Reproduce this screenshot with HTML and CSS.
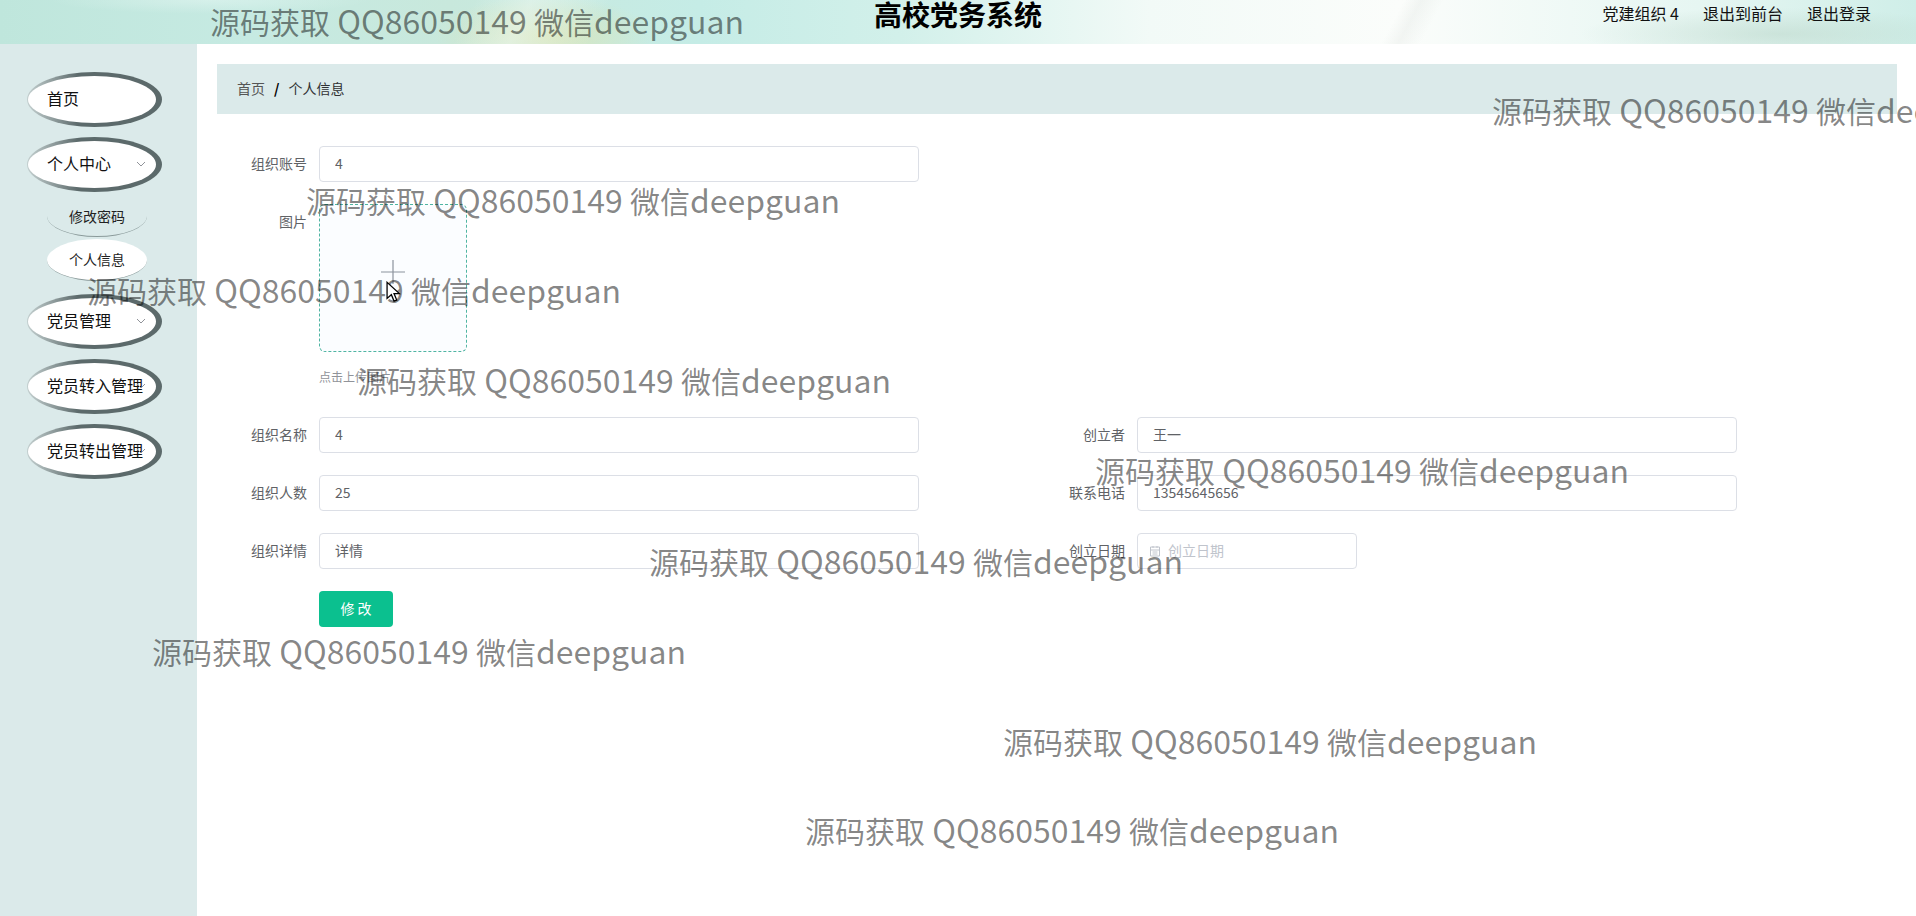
FILE: index.html
```html
<!DOCTYPE HTML>
<html>
<head>
	<title>高校党务系统</title>
	<meta charset="UTF-8">
	<link rel="stylesheet" href="styles.css">
</head>
<body>

	<div class="header">
		<div class="title">高校党务系统</div>
		<div class="header-links">
			<span>党建组织 4</span>
			<span>退出到前台</span>
			<span>退出登录</span>
		</div>
	</div>

	<div class="page">
		<div class="sidebar">
			<div class="pill">首页</div>
			<div class="pill">个人中心
				<svg class="chevron" viewBox="0 0 10 6"><path d="M1 1l4 4 4-4"/></svg>
			</div>
			<div class="sub">修改密码</div>
			<div class="sub sub-active">个人信息</div>
			<div class="pill">党员管理
				<svg class="chevron" viewBox="0 0 10 6"><path d="M1 1l4 4 4-4"/></svg>
			</div>
			<div class="pill">党员转入管理
				<svg class="chevron" viewBox="0 0 10 6"><path d="M1 1l4 4 4-4"/></svg>
			</div>
			<div class="pill">党员转出管理
				<svg class="chevron" viewBox="0 0 10 6"><path d="M1 1l4 4 4-4"/></svg>
			</div>
		</div>

		<div class="main">
			<div class="breadcrumb">
				<span class="crumb-home">首页</span>
				<span class="crumb-sep">/</span>
				<span class="crumb-current">个人信息</span>
			</div>

			<div class="form">
				<div class="item">
					<label>组织账号</label>
					<input class="field" type="text" value="4">
				</div>
				<div></div>

				<div class="item item-upload">
					<label>图片</label>
					<div>
						<div class="upload">
							<svg class="plus" viewBox="0 0 24 24"><path d="M12 0v24M0 12h24"/></svg>
						</div>
						<div class="hint">点击上传图片</div>
					</div>
				</div>
				<div></div>

				<div class="item">
					<label>组织名称</label>
					<input class="field" type="text" value="4">
				</div>
				<div class="item">
					<label>创立者</label>
					<input class="field" type="text" value="王一">
				</div>

				<div class="item">
					<label>组织人数</label>
					<input class="field" type="text" value="25">
				</div>
				<div class="item">
					<label>联系电话</label>
					<input class="field" type="text" value="13545645656">
				</div>

				<div class="item">
					<label>组织详情</label>
					<input class="field" type="text" value="详情">
				</div>
				<div class="item">
					<label>创立日期</label>
					<div class="date">
						<svg class="date-icon" viewBox="0 0 12 12"><path d="M1.500 2h9v9h-9zM1.500 5h9M4 1v2M8 1v2M3.500 7h5M3.500 9h5"/></svg>
						<input class="field field-date" type="text" placeholder="创立日期">
					</div>
				</div>

				<div class="item item-button">
					<button class="btn" type="button">修 改</button>
				</div>
			</div>
		</div>
	</div>

	<div class="wm wm1"><span class="wm-cn">源码获取</span> QQ86050149 <span class="wm-cn">微信</span>deepguan</div>
	<div class="wm wm2"><span class="wm-cn">源码获取</span> QQ86050149 <span class="wm-cn">微信</span>deepguan</div>
	<div class="wm wm3"><span class="wm-cn">源码获取</span> QQ86050149 <span class="wm-cn">微信</span>deepguan</div>
	<div class="wm wm4"><span class="wm-cn">源码获取</span> QQ86050149 <span class="wm-cn">微信</span>deepguan</div>
	<div class="wm wm5"><span class="wm-cn">源码获取</span> QQ86050149 <span class="wm-cn">微信</span>deepguan</div>
	<div class="wm wm6"><span class="wm-cn">源码获取</span> QQ86050149 <span class="wm-cn">微信</span>deepguan</div>
	<div class="wm wm7"><span class="wm-cn">源码获取</span> QQ86050149 <span class="wm-cn">微信</span>deepguan</div>
	<div class="wm wm8"><span class="wm-cn">源码获取</span> QQ86050149 <span class="wm-cn">微信</span>deepguan</div>
	<div class="wm wm9"><span class="wm-cn">源码获取</span> QQ86050149 <span class="wm-cn">微信</span>deepguan</div>
	<div class="wm wm10"><span class="wm-cn">源码获取</span> QQ86050149 <span class="wm-cn">微信</span>deepguan</div>

	<svg class="cursor" viewBox="0 0 14 20"><path d="M1 1v15l4-3.500 2.500 6 2.500-1-2.500-6h5z"/></svg>

</body>
</html>
```

FILE: styles.css
```css
html, body {
	height: 100%;
}

body {
	margin: 0;
	overflow: hidden;
	position: relative;
	font-family: "Noto Sans CJK SC", "Liberation Sans", sans-serif;
	font-size: 14px;
	color: #303133;
	background: #fff;
}

/* header */
.header {
	height: 44px;
	display: flex;
	justify-content: center;
	position: relative;
	overflow: hidden;
	background:
		linear-gradient(118deg, rgba(255, 255, 255, 0) 1240px, rgba(200, 208, 203, 0.18) 1255px, rgba(255, 255, 255, 0) 1275px),
		linear-gradient(118deg, rgba(255, 255, 255, 0) 420px, rgba(240, 250, 245, 0.5) 470px, rgba(255, 255, 255, 0) 540px),
		radial-gradient(ellipse 110px 40px at 545px 36px, rgba(226, 226, 165, 0.65), rgba(226, 226, 165, 0)),
		radial-gradient(ellipse 200px 26px at 1780px 34px, rgba(185, 212, 198, 0.5), rgba(185, 212, 198, 0)),
		radial-gradient(ellipse 160px 14px at 210px 0, rgba(225, 245, 240, 0.6), rgba(225, 245, 240, 0)),
		linear-gradient(90deg, #bfe6dc 0, #c6eae2 250px, #c8e8dc 450px, #c5ece6 700px, #d2f0ea 900px, #f2faf7 1150px, #fbfdfb 1400px, #e6f6f2 1700px, #cfeee8 1916px);
}

.title {
	font-size: 28px;
	font-weight: bold;
	line-height: 28px;
	color: #000;
}

.header-links {
	position: absolute;
	top: 0;
	right: 45px;
	display: flex;
	gap: 24px;
	font-size: 16px;
	line-height: 27px;
	color: #111;
}

/* sidebar */
.page {
	display: flex;
	height: 872px;
}

.sidebar {
	width: 197px;
	flex: none;
	box-sizing: border-box;
	padding: 28px 0 0 27px;
	background: #dbeaea;
}

.pill {
	box-sizing: border-box;
	width: 135px;
	height: 55px;
	margin-bottom: 10px;
	padding-left: 19px;
	position: relative;
	font-size: 16px;
	line-height: 45px;
	color: #111;
	white-space: nowrap;
	border-radius: 50%;
	border: solid transparent;
	border-width: 4px 6px 4px 1px;
	background:
		linear-gradient(#fff, #fff) padding-box,
		linear-gradient(90deg, #c4d0d0 0, #5c6a6b 38%, #5c6a6b 100%) border-box;
}

.chevron {
	position: absolute;
	top: 20px;
	right: 10px;
	width: 10px;
	height: 6px;
	fill: none;
	stroke: #909399;
	stroke-width: 1;
}

.sub {
	box-sizing: border-box;
	width: 100px;
	height: 42px;
	margin: -7px 0 9px 20px;
	text-align: center;
	font-size: 14px;
	line-height: 42px;
	color: #222;
	border-radius: 50%;
	border-bottom: 1px solid #8a9a9a;
}

.sub-active {
	margin-bottom: 13px;
	line-height: 40px;
	background: #fff;
}

/* main area */
.main {
	flex: 1;
	padding: 20px 19px 0 20px;
}

.breadcrumb {
	box-sizing: border-box;
	height: 50px;
	display: flex;
	align-items: center;
	gap: 9px;
	padding: 0 0 2px 20px;
	background: #dbeaea;
}

.crumb-home {
	color: #555;
}

.crumb-sep {
	font-weight: bold;
	color: #000;
}

.crumb-current {
	color: #303133;
}

.form {
	display: grid;
	grid-template-columns: 818px 818px;
	padding-top: 32px;
}

.item {
	display: flex;
	margin-bottom: 22px;
}

.item label {
	width: 90px;
	flex: none;
	text-align: right;
	padding-right: 12px;
	line-height: 34px;
	color: #606266;
}

.field {
	box-sizing: border-box;
	width: 600px;
	height: 36px;
	padding: 0 15px 2px;
	font-family: inherit;
	font-size: 14px;
	color: #606266;
	background: #fff;
	border: 1px solid #dcdfe6;
	border-radius: 4px;
	outline: none;
}

.field::placeholder {
	color: #c0c4cc;
}

.date {
	position: relative;
}

.field-date {
	width: 220px;
	padding-left: 30px;
}

.date-icon {
	position: absolute;
	top: 12px;
	left: 12px;
	width: 12px;
	height: 12px;
	fill: none;
	stroke: #c0c4cc;
	stroke-width: 1;
}

.upload {
	box-sizing: border-box;
	width: 148px;
	height: 148px;
	display: flex;
	align-items: center;
	justify-content: center;
	background: #fbfdff;
	border: 1px dashed #4fb5a2;
	border-radius: 6px;
}

.plus {
	width: 24px;
	height: 24px;
	margin-bottom: 12px;
	fill: none;
	stroke: #8c939d;
	stroke-width: 1.200;
}

.hint {
	margin: 15px 0 8px;
	font-size: 12px;
	line-height: 20px;
	color: #909399;
}

.item-button {
	padding-left: 102px;
}

.btn {
	width: 74px;
	height: 36px;
	padding: 0 0 2px;
	font-family: inherit;
	font-size: 14px;
	color: #fff;
	background: #0bc08f;
	border: 0;
	border-radius: 4px;
}

/* mouse pointer */
.cursor {
	position: absolute;
	top: 281px;
	left: 386px;
	width: 15px;
	height: 22px;
	fill: #fff;
	stroke: #000;
	stroke-width: 1.200;
}

/* watermark */
.wm {
	position: absolute;
	font-size: 32px;
	line-height: 44px;
	white-space: nowrap;
	color: rgba(0, 0, 0, 0.48);
	pointer-events: none;
}

.wm-cn {
	font-size: 30px;
}

.wm1 { left: 210px; top: -2px; }
.wm2 { left: 1492px; top: 87px; }
.wm3 { left: 306px; top: 177px; }
.wm4 { left: 87px; top: 267px; }
.wm5 { left: 357px; top: 357px; }
.wm6 { left: 1095px; top: 447px; }
.wm7 { left: 649px; top: 538px; }
.wm8 { left: 152px; top: 628px; }
.wm9 { left: 1003px; top: 718px; }
.wm10 { left: 805px; top: 807px; }
```
